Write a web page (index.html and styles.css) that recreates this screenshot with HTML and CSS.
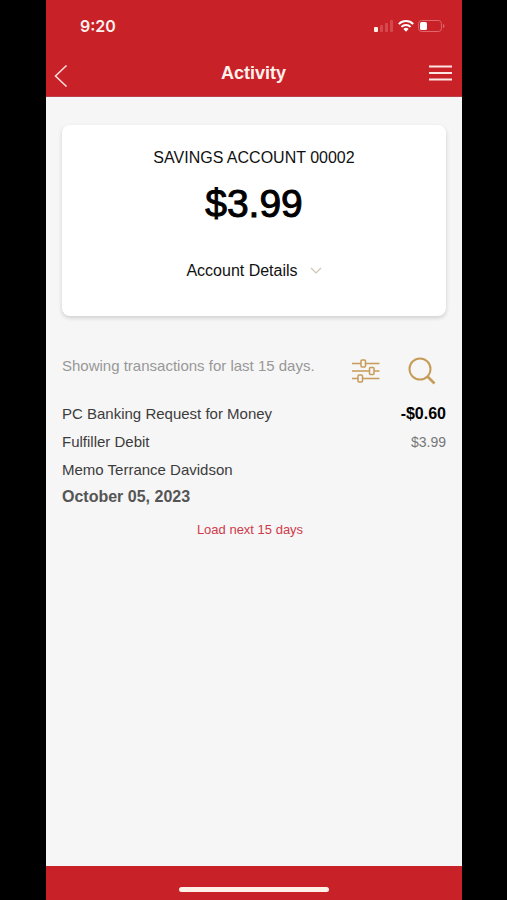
FILE: index.html
```html
<!DOCTYPE html>
<html lang="en">
<head>
<meta charset="utf-8">
<meta name="viewport" content="width=device-width, initial-scale=1">
<title>Activity</title>
<link rel="stylesheet" href="styles.css">
</head>
<body>
<div class="phone">
  <header class="header">
    <div class="status">
      <span class="clock">9:20</span>
      <div class="indicators">
        <svg width="20" height="14" viewBox="0 0 20 14" aria-hidden="true">
          <rect x="0" y="8" width="4" height="5" rx="1" fill="#fff0e8"/>
          <g fill="#d5484e"><rect x="6" y="6" width="3" height="7" rx="1"/><rect x="11" y="4" width="3" height="9" rx="1"/><rect x="16" y="1" width="3" height="12" rx="1"/></g>
        </svg>
        <svg width="16" height="14" viewBox="0 0 16 14" aria-hidden="true">
          <g fill="none" stroke="#fff" stroke-width="2"><path d="M.8 5.1a10.2 10.2 0 0 1 14.4 0"/><path d="M3.4 7.9a6.5 6.5 0 0 1 9.2 0"/></g>
          <path d="M5.4 10a3.7 3.7 0 0 1 5.2 0L8 12.8z" fill="#fff"/>
        </svg>
        <svg width="27" height="14" viewBox="0 0 27 14" aria-hidden="true">
          <rect x=".6" y="1.5" width="22.8" height="11" rx="3" fill="none" stroke="#df686c"/>
          <rect x="2" y="3" width="7" height="8" rx="1.5" fill="#fff"/>
          <path d="M25 5v4q1.600-.6 1.600-2T25 5z" fill="#df686c"/>
        </svg>
      </div>
    </div>
    <nav class="nav">
      <button class="icon-button" type="button" aria-label="Back">
        <svg width="14" height="30" viewBox="0 0 14 30"><path d="M12.500 7.500 1.500 18l11 10.500" fill="none" stroke="#fbdcd8" stroke-width="1.600"/></svg>
      </button>
      <h1 class="title">Activity</h1>
      <button class="icon-button" type="button" aria-label="Menu">
        <svg width="23" height="18" viewBox="0 0 23 18"><path d="M0 2.500h23M0 9h23M0 15.500h23" stroke="#fde5e3" stroke-width="2.200"/></svg>
      </button>
    </nav>
  </header>
  <main class="content">
    <section class="card">
      <h2 class="account">SAVINGS ACCOUNT 00002</h2>
      <p class="balance">$3.99</p>
      <button class="details" type="button">Account Details
        <svg width="12" height="8" viewBox="0 0 12 8" aria-hidden="true"><path d="m1 1 5 5 5-5" fill="none" stroke="#cfc5b2" stroke-width="1.200"/></svg>
      </button>
    </section>
    <div class="toolbar">
      <p class="range">Showing transactions for last 15 days.</p>
      <div class="tools">
        <button class="icon-button" type="button" aria-label="Filter">
          <svg width="28" height="26" viewBox="0 0 28 26" fill="none" stroke="#c79c58" stroke-width="1.500">
            <path d="M0 5.500h9M14 5.500h13.500M0 13h17M22 13h5.500M0 20.500h6M11 20.500h16.500"/>
            <rect x="9" y="2" width="4.500" height="7" rx="1"/><rect x="17.500" y="9.500" width="4.500" height="7" rx="1"/><rect x="6" y="17" width="4.500" height="7" rx="1"/>
          </svg>
        </button>
        <button class="icon-button" type="button" aria-label="Search">
          <svg width="28" height="28" viewBox="0 0 28 28" fill="none" stroke="#c79c58" stroke-width="2"><circle cx="12" cy="12" r="10.500"/><path d="m19.500 19.500 7 7" stroke-width="2.600"/></svg>
        </button>
      </div>
    </div>
    <article class="transaction">
      <div class="info">
        <p>PC Banking Request for Money</p>
        <p>Fulfiller Debit</p>
        <p>Memo Terrance Davidson</p>
        <p class="date">October 05, 2023</p>
      </div>
      <div class="figures">
        <p class="amount">-$0.60</p>
        <p class="running">$3.99</p>
      </div>
    </article>
    <button class="load" type="button">Load next 15 days</button>
  </main>
  <footer class="footer"><div class="home"></div></footer>
</div>
</body>
</html>
```
FILE: styles.css
```css
* { box-sizing: border-box; }
body {
  margin: 0;
  background: #000;
  font-family: "Liberation Sans", Arial, sans-serif;
}
h1, h2, p { margin: 0; }
button {
  padding: 0;
  border: 0;
  background: none;
  font: inherit;
  color: inherit;
  cursor: pointer;
}
svg { display: block; }
.phone {
  display: flex;
  flex-direction: column;
  min-height: 100vh;
  margin: 0 45px 0 46px;
  background: #f6f6f6;
}
.header {
  background: #c82128;
  color: #fff0ec;
  border-bottom: 1px solid #b9434a;
}
.status {
  display: flex;
  justify-content: space-between;
  align-items: center;
  height: 52px;
  padding: 0 17px 0 34px;
}
.clock {
  font: 600 16px/20px Inter, sans-serif;
}
.indicators {
  display: flex;
  gap: 4px;
}
.nav {
  display: grid;
  grid-template-columns: 24px 1fr 24px;
  align-items: center;
  height: 44px;
  padding: 0 9px 2px 8px;
}
.title {
  font-size: 18px;
  line-height: 24px;
  text-align: center;
}
.content {
  flex: 1;
  padding: 28px 16px;
  color: #3c3c3c;
}
.card {
  display: flex;
  flex-direction: column;
  align-items: center;
  padding: 21px 16px 35px;
  border-radius: 8px;
  background: #fff;
  box-shadow: 0 2px 4px rgb(0 0 0 / 16%);
  color: #111;
}
.account {
  font-size: 16px;
  font-weight: 400;
  line-height: 24px;
}
.balance {
  margin: 8px 0 31px;
  color: #000;
  font-size: 39px;
  line-height: 52px;
  -webkit-text-stroke: 1px #000;
}
.details {
  display: flex;
  align-items: center;
  gap: 12px;
  font-size: 16px;
  line-height: 20px;
}
.toolbar {
  display: flex;
  justify-content: space-between;
  margin-top: 40px;
}
.range {
  color: #989898;
  font-size: 15px;
  line-height: 20px;
}
.tools {
  display: flex;
  align-items: center;
  gap: 28px;
  padding: 1px 10px 0 0;
}
.transaction {
  display: flex;
  justify-content: space-between;
  margin-top: 15px;
  font-size: 15px;
  line-height: 28px;
}
.date {
  color: #555;
  font-size: 16px;
  font-weight: 700;
  line-height: 26px;
}
.figures { text-align: right; }
.amount {
  color: #000;
  font-size: 16px;
  font-weight: 700;
}
.running {
  color: #777;
  font-size: 14px;
}
.load {
  display: block;
  margin: 10px auto 0;
  padding-right: 8px;
  color: #cf3a4b;
  font-size: 13px;
  line-height: 20px;
}
.footer {
  display: flex;
  justify-content: center;
  height: 34px;
  padding-top: 21px;
  background: #c82128;
}
.home {
  width: 36%;
  height: 5px;
  border-radius: 4px;
  background: #fff0e8;
}
```
